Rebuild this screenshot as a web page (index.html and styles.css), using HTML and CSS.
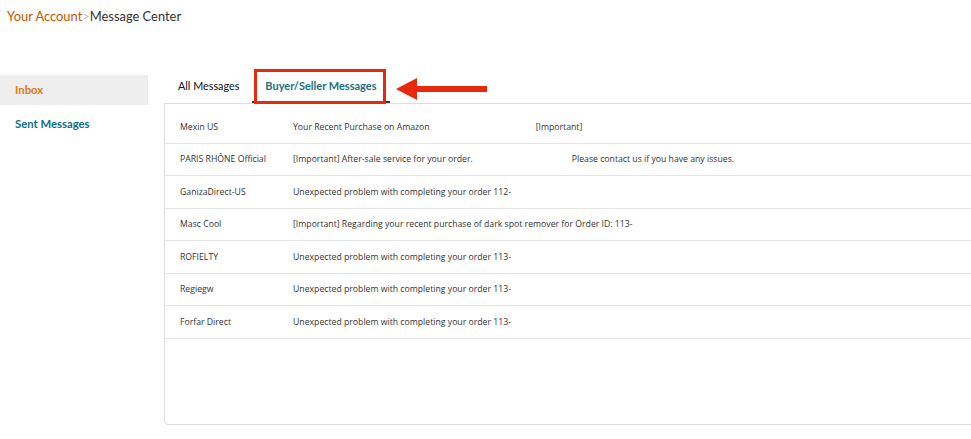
FILE: index.html
```html
<!DOCTYPE html>
<html>
  <head>
    <meta charset="utf-8">
    <title>Message Center</title>
    <link rel="stylesheet" href="styles.css">
  </head>
  <body>
    <div class="crumb">
      <a class="crumb-link" href="#">Your Account</a><span class="crumb-sep">&gt;</span><span class="crumb-here">Message Center</span>
    </div>

    <div class="layout">
      <nav class="side">
        <a class="side-item active" href="#">Inbox</a>
        <a class="side-item" href="#">Sent Messages</a>
      </nav>

      <main class="main">
        <div class="tabs">
          <a class="tab" href="#">All Messages</a>
          <a class="tab current" href="#">Buyer/Seller Messages</a>
          <!-- annotation -->
          <span class="mark"></span>
          <svg class="arrow" width="94" height="26" viewBox="0 0 94 26">
            <path d="M0 13 L21 2 L21 10 L91 10 L91 16 L21 16 L21 24 Z" fill="#e8290d"/>
          </svg>
        </div>

        <div class="panel">
          <div class="row">
            <span class="from">Mexin US</span>
            <span class="subject">Your Recent Purchase on Amazon</span>
            <span class="preview first">[Important]</span>
          </div>
          <div class="row">
            <span class="from">PARIS RHÔNE Official</span>
            <span class="subject">[Important] After-sale service for your order.</span>
            <span class="preview second">Please contact us if you have any issues.</span>
          </div>
          <div class="row">
            <span class="from">GanizaDirect-US</span>
            <span class="subject">Unexpected problem with completing your order 112-</span>
          </div>
          <div class="row">
            <span class="from">Masc Cool</span>
            <span class="subject">[Important] Regarding your recent purchase of dark spot remover for Order ID: 113-</span>
          </div>
          <div class="row">
            <span class="from">ROFIELTY</span>
            <span class="subject">Unexpected problem with completing your order 113-</span>
          </div>
          <div class="row">
            <span class="from">Regiegw</span>
            <span class="subject">Unexpected problem with completing your order 113-</span>
          </div>
          <div class="row">
            <span class="from">Forfar Direct</span>
            <span class="subject">Unexpected problem with completing your order 113-</span>
          </div>
        </div>
      </main>
    </div>
  </body>
</html>
```

FILE: styles.css
```css
body { margin: 0; font-family: "Open Sans", Arial, sans-serif; color: #333; background: #fff; overflow: hidden; }
a { text-decoration: none; }

.crumb { padding: 5px 0 0 7px; font-family: Lato, Arial, sans-serif; font-size: 12.9px; line-height: 22px; }
.crumb-link { color: #c45500; }
.crumb-sep { color: #bbb; }
.crumb-here { color: #333; }

.layout { display: flex; margin-top: 40px; }

.side { width: 148px; padding-top: 8px; flex-shrink: 0; }
.side-item { display: block; height: 30px; line-height: 30px; padding-left: 15px; font-family: Lato, Arial, sans-serif; font-weight: bold; font-size: 11.3px; color: #0f6e80; }
.side-item.active { background: #eee; color: #e47911; margin-bottom: 4px; }

.main { margin-left: 16px; flex: 1; margin-right: -10px; }

.tabs { position: relative; display: flex; height: 36px; padding-left: 3px; }
.tab { padding: 0 11px; line-height: 38px; font-family: Lato, Arial, sans-serif; font-size: 10.8px; color: #111; border-bottom: 2px solid transparent; }
.tab.current { font-weight: bold; font-size: 11px; color: #1b6f80; border-bottom-color: #333; margin-left: 2px; padding: 0 13px; }

.mark { position: absolute; left: 90px; top: 2px; width: 126px; height: 29px; border: 3px solid #e8290d; }
.arrow { position: absolute; left: 232px; top: 9px; }

.panel { border: 1px solid #ddd; border-radius: 0 0 0 4px; height: 322px; padding-top: 7px; box-sizing: border-box; font-size: 8.7px; color: #333; }
.row { display: flex; align-items: center; height: 32.5px; border-bottom: 1px solid #e7e7e7; box-sizing: border-box; white-space: nowrap; }
.from { width: 113px; padding-left: 15px; flex-shrink: 0; }
.preview.first { margin-left: 106px; }
.preview.second { margin-left: 99px; }
```
